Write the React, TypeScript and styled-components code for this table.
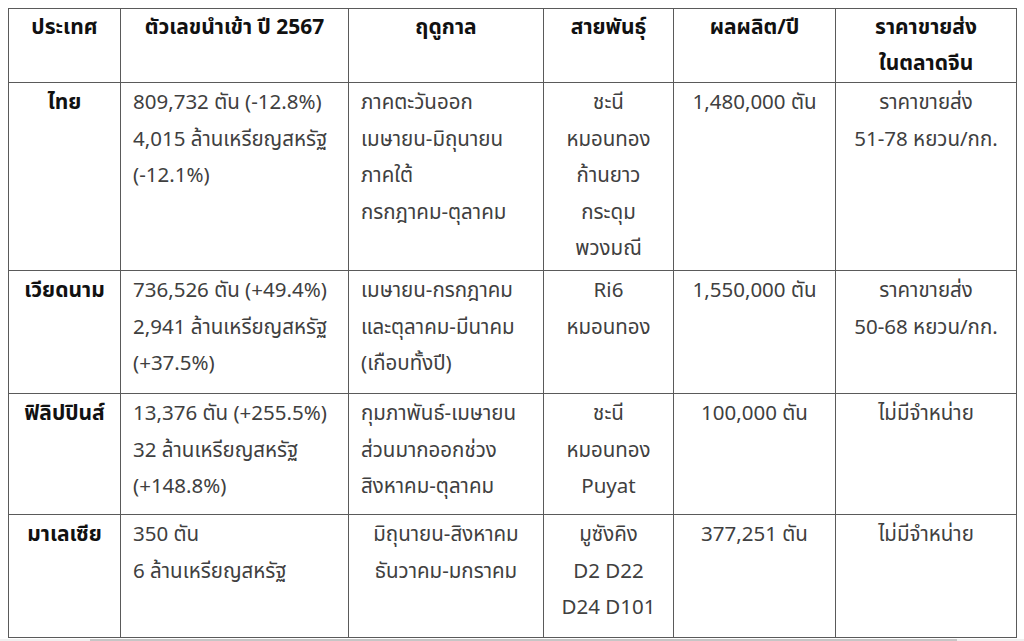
import React from 'react';
import styled, { createGlobalStyle } from 'styled-components';

const GlobalStyle = createGlobalStyle`
  html, body {
    margin: 0;
    background: #ffffff;
    overflow: hidden;
  }
  body {
    padding: 8px 0 0 8px;
    font-family: "Noto Sans Thai", "Noto Sans", "Liberation Sans", sans-serif;
  }
`;

const Page = styled.div`
  width: 1016px;
`;

const Table = styled.table`
  border-collapse: collapse;
  table-layout: fixed;
  width: 1008px;
  font-size: 20.5px;
  line-height: 36.5px;
  color: #404040;
`;

const Row = styled.tr<{ h: number }>`
  height: ${(p) => p.h}px;
`;

const HeadCell = styled.th`
  border: 1px solid #5a5a5a;
  padding: 1px 6px 0;
  vertical-align: top;
  text-align: center;
  font-size: 21px;
  line-height: 36px;
  font-weight: 700;
  color: #111111;
  white-space: nowrap;
`;

const Cell = styled.td<{ align?: 'left' | 'center'; bold?: boolean }>`
  border: 1px solid #5a5a5a;
  padding: 2px 12px 0;
  vertical-align: top;
  text-align: ${(p) => p.align ?? 'center'};
  font-weight: ${(p) => (p.bold ? 700 : 400)};
  font-size: ${(p) => (p.bold ? 21 : 20.5)}px;
  color: ${(p) => (p.bold ? '#111111' : '#404040')};
  white-space: nowrap;
`;

const Line = styled.div``;

const Scrollbar = styled.div`
  margin: 1px 0 0 -8px;
  height: 4px;
  width: 1024px;
  background: #f0f0f0;
  display: flex;
`;

const Thumb = styled.div`
  margin-left: 90px;
  width: 867px;
  background: #c6c6c6;
`;

const widths = [112, 228, 195, 130, 162, 181];

const header = ['ประเทศ', 'ตัวเลขนำเข้า ปี 2567', 'ฤดูกาล', 'สายพันธุ์', 'ผลผลิต/ปี', 'ราคาขายส่ง\nในตลาดจีน'];

interface Country {
  name: string
  height: number
  imports: string[]
  season: string[]
  seasonAlign: 'left' | 'center'
  varieties: string[]
  output: string
  price: string[]
}

const rows: Country[] = [
  {
    name: 'ไทย',
    height: 188,
    imports: ['809,732 ตัน (-12.8%)', '4,015 ล้านเหรียญสหรัฐ', '(-12.1%)'],
    season: ['ภาคตะวันออก', 'เมษายน-มิถุนายน', 'ภาคใต้', 'กรกฎาคม-ตุลาคม'],
    seasonAlign: 'left',
    varieties: ['ชะนี', 'หมอนทอง', 'ก้านยาว', 'กระดุม', 'พวงมณี'],
    output: '1,480,000 ตัน',
    price: ['ราคาขายส่ง', '51-78 หยวน/กก.'],
  },
  {
    name: 'เวียดนาม',
    height: 123,
    imports: ['736,526 ตัน (+49.4%)', '2,941 ล้านเหรียญสหรัฐ', '(+37.5%)'],
    season: ['เมษายน-กรกฎาคม', 'และตุลาคม-มีนาคม', '(เกือบทั้งปี)'],
    seasonAlign: 'left',
    varieties: ['Ri6', 'หมอนทอง'],
    output: '1,550,000 ตัน',
    price: ['ราคาขายส่ง', '50-68 หยวน/กก.'],
  },
  {
    name: 'ฟิลิปปินส์',
    height: 121,
    imports: ['13,376 ตัน (+255.5%)', '32 ล้านเหรียญสหรัฐ', '(+148.8%)'],
    season: ['กุมภาพันธ์-เมษายน', 'ส่วนมากออกช่วง', 'สิงหาคม-ตุลาคม'],
    seasonAlign: 'left',
    varieties: ['ชะนี', 'หมอนทอง', 'Puyat'],
    output: '100,000 ตัน',
    price: ['ไม่มีจำหน่าย'],
  },
  {
    name: 'มาเลเซีย',
    height: 123,
    imports: ['350 ตัน', '6 ล้านเหรียญสหรัฐ'],
    season: ['มิถุนายน-สิงหาคม', 'ธันวาคม-มกราคม'],
    seasonAlign: 'center',
    varieties: ['มูซังคิง', 'D2 D22', 'D24 D101'],
    output: '377,251 ตัน',
    price: ['ไม่มีจำหน่าย'],
  },
];

const lines = (items: string[]) => items.map((t) => <Line key={t}>{t}</Line>);

const App = () => (
  <Page>
    <GlobalStyle />
    <Table>
      <colgroup>
        {widths.map((w, i) => <col key={i} style={{ width: w }} />)}
      </colgroup>
      <thead>
        <Row h={73}>
          {header.map((h) => (
            <HeadCell key={h}>{lines(h.split('\n'))}</HeadCell>
          ))}
        </Row>
      </thead>
      <tbody>
        {rows.map((r) => (
          <Row key={r.name} h={r.height}>
            <Cell bold>{r.name}</Cell>
            <Cell align="left">{lines(r.imports)}</Cell>
            <Cell align={r.seasonAlign}>{lines(r.season)}</Cell>
            <Cell>{lines(r.varieties)}</Cell>
            <Cell>{r.output}</Cell>
            <Cell>{lines(r.price)}</Cell>
          </Row>
        ))}
      </tbody>
    </Table>
    <Scrollbar>
      <Thumb />
    </Scrollbar>
  </Page>
);

export default App;
